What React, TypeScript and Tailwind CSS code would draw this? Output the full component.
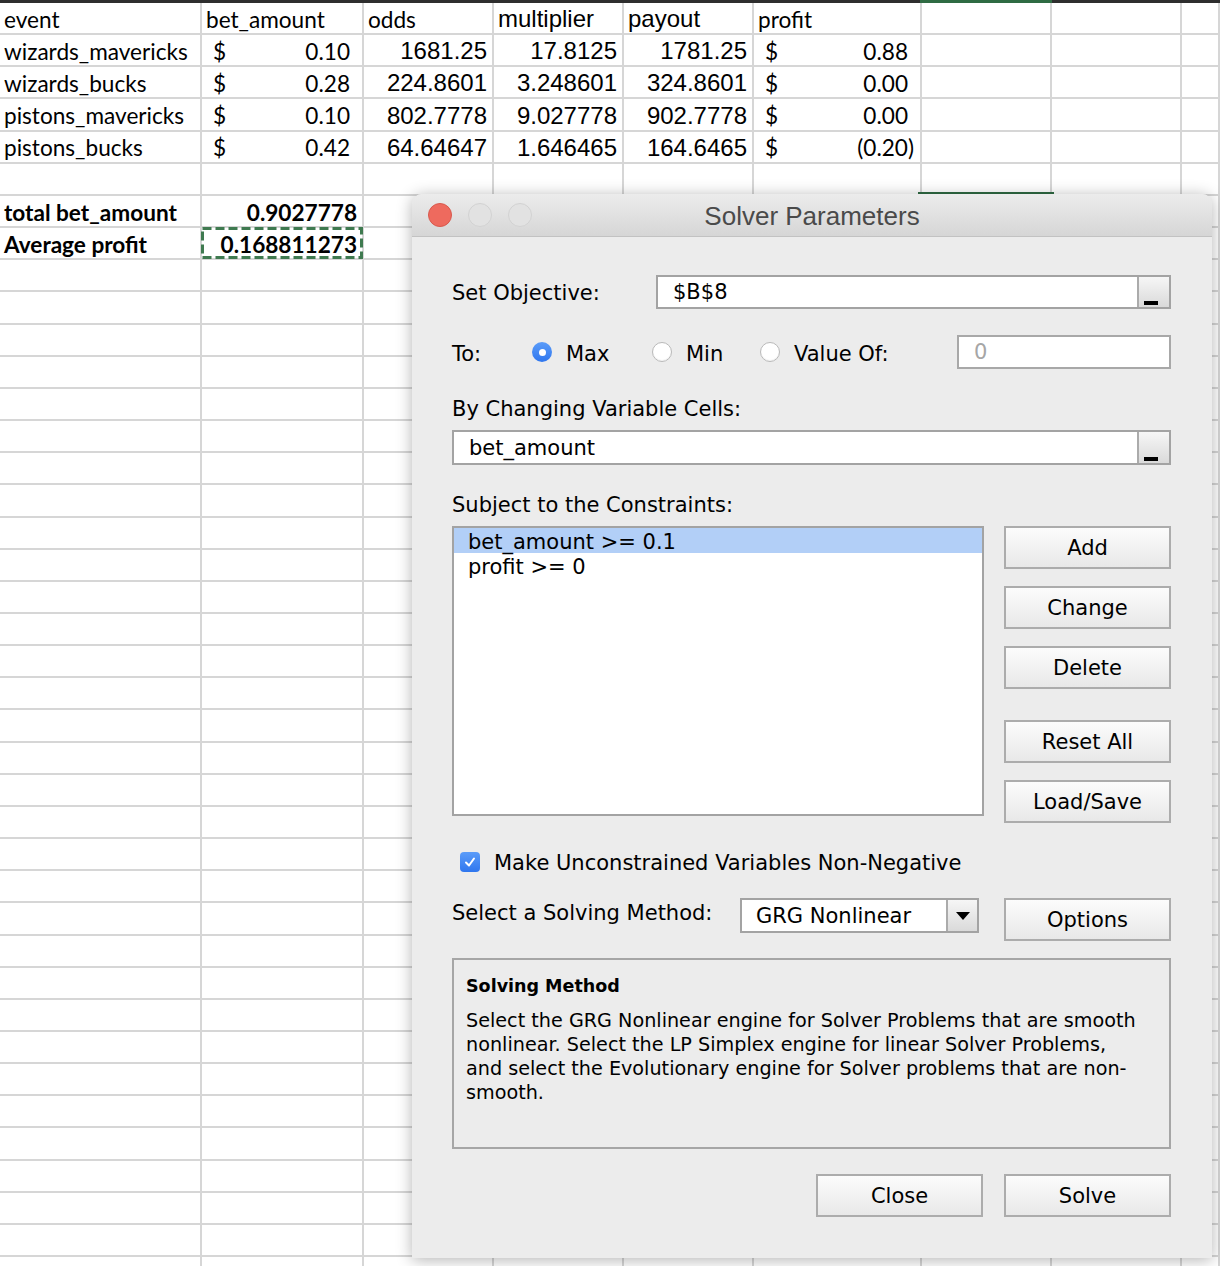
import React from "react"

const L = ({ children, bold }: { children: React.ReactNode; bold?: boolean }) => (
  <div className={`h-full flex items-center pl-[4px] pt-[3px] font-[Lato,sans-serif] text-[22.6px] text-black whitespace-nowrap ${bold ? "font-bold" : ""}`}>
    {children}
  </div>
)

const H = ({ children }: { children: React.ReactNode }) => (
  <div className="h-full flex items-center pl-[4px] pt-[2px] font-['Liberation_Sans',Arial,sans-serif] text-[24px] text-black">
    {children}
  </div>
)

const N = ({ children }: { children: React.ReactNode }) => (
  <div className="h-full flex items-center justify-end pr-[5px] pt-[2px] font-['Liberation_Sans',Arial,sans-serif] text-[24px] text-black">
    {children}
  </div>
)

const R = ({ children }: { children: React.ReactNode }) => (
  <div className="h-full flex items-center justify-end pr-[5px] pt-[3px] font-[Lato,sans-serif] text-[22.6px] font-bold text-black">
    {children}
  </div>
)

const Acc = ({ v, neg }: { v: string; neg?: boolean }) => (
  <div className={`h-full flex items-center justify-between pl-[11px] pt-[3px] font-[Lato,sans-serif] text-[22.6px] text-black ${neg ? "pr-[6px]" : "pr-[12px]"}`}>
    <span>$</span>
    <span>{v}</span>
  </div>
)

const sheet: React.ReactNode[][] = [
  [<L>event</L>, <L>bet_amount</L>, <L>odds</L>, <H>multiplier</H>, <H>payout</H>, <L>profit</L>],
  [<L>wizards_mavericks</L>, <Acc v="0.10" />, <N>1681.25</N>, <N>17.8125</N>, <N>1781.25</N>, <Acc v="0.88" />],
  [<L>wizards_bucks</L>, <Acc v="0.28" />, <N>224.8601</N>, <N>3.248601</N>, <N>324.8601</N>, <Acc v="0.00" />],
  [<L>pistons_mavericks</L>, <Acc v="0.10" />, <N>802.7778</N>, <N>9.027778</N>, <N>902.7778</N>, <Acc v="0.00" />],
  [<L>pistons_bucks</L>, <Acc v="0.42" />, <N>64.64647</N>, <N>1.646465</N>, <N>164.6465</N>, <Acc v="(0.20)" neg />],
  [],
  [<L bold>total bet_amount</L>, <R>0.9027778</R>],
  [<L bold>Average profit</L>, <R>0.168811273</R>],
]

const ROWS = 40
const COLS = 9

const Btn = ({ children, className = "" }: { children: React.ReactNode; className?: string }) => (
  <div className={`h-[43px] w-[167px] flex items-center justify-center pt-[3px] border-2 border-[#acacac] bg-gradient-to-b from-[#fcfcfc] to-[#e8e8e8] text-[21px] text-black ${className}`}>
    {children}
  </div>
)

const RefInput = ({ value, h }: { value: string; h: string }) => (
  <div className={`relative flex-1 ${h} flex items-center border-2 border-[#a3a3a3] bg-white pl-[15px] pt-[2px] text-[21px] text-black`}>
    {value}
    <div className="absolute right-0 top-0 bottom-0 w-[32px] border-l-2 border-[#ababab] bg-gradient-to-b from-[#f6f6f6] to-[#dadada]">
      <div className="absolute left-[5px] bottom-[2px] w-[14px] h-[4px] bg-black" />
    </div>
  </div>
)

const Radio = ({ checked }: { checked?: boolean }) =>
  checked ? (
    <div className="w-[20px] h-[20px] rounded-full bg-gradient-to-b from-[#5b9cf9] to-[#2f76ee] flex items-center justify-center">
      <div className="w-[7px] h-[7px] rounded-full bg-white" />
    </div>
  ) : (
    <div className="w-[20px] h-[20px] rounded-full bg-white border border-[#b9b9b9] shadow-[inset_0_-1px_1px_rgba(0,0,0,0.05)]" />
  )

export default function App() {
  return (
    <div className="relative w-[1220px] h-[1266px] overflow-hidden bg-white">
      {/* spreadsheet */}
      <div className="border-t-[3px] border-[#2e2e2e]">
        <div className="grid grid-cols-[202px_162px_130px_130px_130px_168px_130px_130px_1fr] auto-rows-[32.16px]">
          {Array.from({ length: ROWS }).map((_, r) =>
            Array.from({ length: COLS }).map((_, c) => (
              <div key={`${r}-${c}`} className="border-r-2 border-b-2 border-[#d6d6d6] overflow-visible">
                {sheet[r]?.[c] ?? null}
              </div>
            ))
          )}
        </div>
      </div>

      {/* selected column marks */}
      <div className="absolute left-[920px] top-0 w-[132px] h-[3px] bg-[#2f6b43]" />
      <div className="absolute left-[918px] top-[192px] w-[136px] h-[2px] bg-[#2f6b43]" />

      {/* copy marquee */}
      <svg className="absolute left-[201px] top-[227px]" width="162" height="32">
        <rect x="1.5" y="1.5" width="159" height="29" fill="none" stroke="#3f7a50" strokeWidth="3" strokeDasharray="9 4" />
      </svg>

      {/* Solver dialog */}
      <div className="absolute left-[412px] top-[194px] w-[800px] h-[1064px] rounded-t-[10px] bg-[#ececec] shadow-[0_2px_16px_rgba(0,0,0,0.3)] font-['DejaVu_Sans',sans-serif] text-black">
        <div className="relative h-[43px] rounded-t-[10px] bg-gradient-to-b from-[#ececec] to-[#d6d6d6] border-b border-[#c2c2c2] flex items-center">
          <div className="absolute left-[16px] top-[9px] flex gap-[16px]">
            <div className="w-[24px] h-[24px] rounded-full bg-[#ee6a5e] border border-[#d8594d]" />
            <div className="w-[24px] h-[24px] rounded-full bg-[#e2e2e2] border border-[#d2d2d2]" />
            <div className="w-[24px] h-[24px] rounded-full bg-[#e2e2e2] border border-[#d2d2d2]" />
          </div>
          <div className="w-full text-center pt-[2px] font-['Liberation_Sans',Arial,sans-serif] text-[26px] text-[#4a4a4a]">
            Solver Parameters
          </div>
        </div>

        <div className="pl-[40px] pr-[41px]">
          <div className="mt-[38px] h-[34px] flex items-center">
            <div className="w-[204px] pt-[3px] text-[21px]">Set Objective:</div>
            <RefInput value="$B$8" h="h-[34px]" />
          </div>

          <div className="mt-[26px] h-[34px] flex items-center text-[21px]">
            <div className="w-[80px] pt-[6px]">To:</div>
            <div className="w-[120px] flex items-center gap-[14px]">
              <Radio checked />
              <span className="pt-[6px]">Max</span>
            </div>
            <div className="w-[108px] flex items-center gap-[14px]">
              <Radio />
              <span className="pt-[6px]">Min</span>
            </div>
            <div className="w-[197px] flex items-center gap-[14px]">
              <Radio />
              <span className="pt-[6px]">Value Of:</span>
            </div>
            <div className="w-[214px] h-[34px] flex items-center border-2 border-[#a8a8a8] bg-white pl-[15px] pt-[2px] text-[#a6a6a6]">
              0
            </div>
          </div>

          <div className="mt-[27px] h-[24px] leading-[24px] pt-[1px] text-[21px]">By Changing Variable Cells:</div>
          <div className="mt-[10px] flex">
            <RefInput value="bet_amount" h="h-[35px]" />
          </div>

          <div className="mt-[27px] h-[24px] leading-[24px] pt-[1px] text-[21px]">Subject to the Constraints:</div>
          <div className="mt-[10px] flex items-start">
            <div className="w-[532px] h-[290px] border-2 border-[#a3a3a3] bg-white text-[21px]">
              <div className="h-[25px] leading-[25px] pt-[2px] bg-[#b2cff7] pl-[14px]">bet_amount &gt;= 0.1</div>
              <div className="h-[25px] leading-[25px] pt-[2px] pl-[14px]">profit &gt;= 0</div>
            </div>
            <div className="ml-[20px] flex flex-col">
              <Btn>Add</Btn>
              <Btn className="mt-[17px]">Change</Btn>
              <Btn className="mt-[17px]">Delete</Btn>
              <Btn className="mt-[31px]">Reset All</Btn>
              <Btn className="mt-[17px]">Load/Save</Btn>
            </div>
          </div>

          <div className="mt-[27px] h-[24px] flex items-center pl-[8px] gap-[14px] text-[21px]">
            <div className="w-[20px] h-[20px] rounded-[4px] bg-gradient-to-b from-[#5b9cf9] to-[#2f76ee] flex items-center justify-center">
              <svg width="14" height="14" viewBox="0 0 14 14">
                <path d="M3 7.5 L6 10.5 L11 3.5" fill="none" stroke="white" strokeWidth="2" strokeLinecap="round" strokeLinejoin="round" />
              </svg>
            </div>
            <span className="pt-[4px]">Make Unconstrained Variables Non-Negative</span>
          </div>

          <div className="mt-[24px] h-[43px] flex items-start text-[21px]">
            <div className="w-[288px] h-[28px] leading-[28px] pt-[1px]">Select a Solving Method:</div>
            <div className="relative w-[239px] h-[35px] flex items-center border-2 border-[#a3a3a3] bg-white pl-[14px] pt-[2px]">
              GRG Nonlinear
              <div className="absolute right-0 top-0 bottom-0 w-[31px] border-l-2 border-[#ababab] bg-gradient-to-b from-[#f6f6f6] to-[#dadada] flex items-center justify-center">
                <svg width="14" height="8" viewBox="0 0 14 8">
                  <polygon points="0,0 14,0 7,8" fill="black" />
                </svg>
              </div>
            </div>
            <Btn className="ml-[25px]">Options</Btn>
          </div>

          <div className="mt-[17px] h-[191px] border-2 border-[#a6a6a6] pl-[12px] pt-[14px]">
            <div className="h-[24px] leading-[24px] font-bold text-[17.5px]">Solving Method</div>
            <div className="mt-[11px] leading-[24px] text-[19.2px]">
              <div>Select the GRG Nonlinear engine for Solver Problems that are smooth</div>
              <div>nonlinear. Select the LP Simplex engine for linear Solver Problems,</div>
              <div>and select the Evolutionary engine for Solver problems that are non-</div>
              <div>smooth.</div>
            </div>
          </div>

          <div className="mt-[25px] flex justify-end gap-[21px]">
            <Btn>Close</Btn>
            <Btn>Solve</Btn>
          </div>
        </div>
      </div>
    </div>
  )
}
